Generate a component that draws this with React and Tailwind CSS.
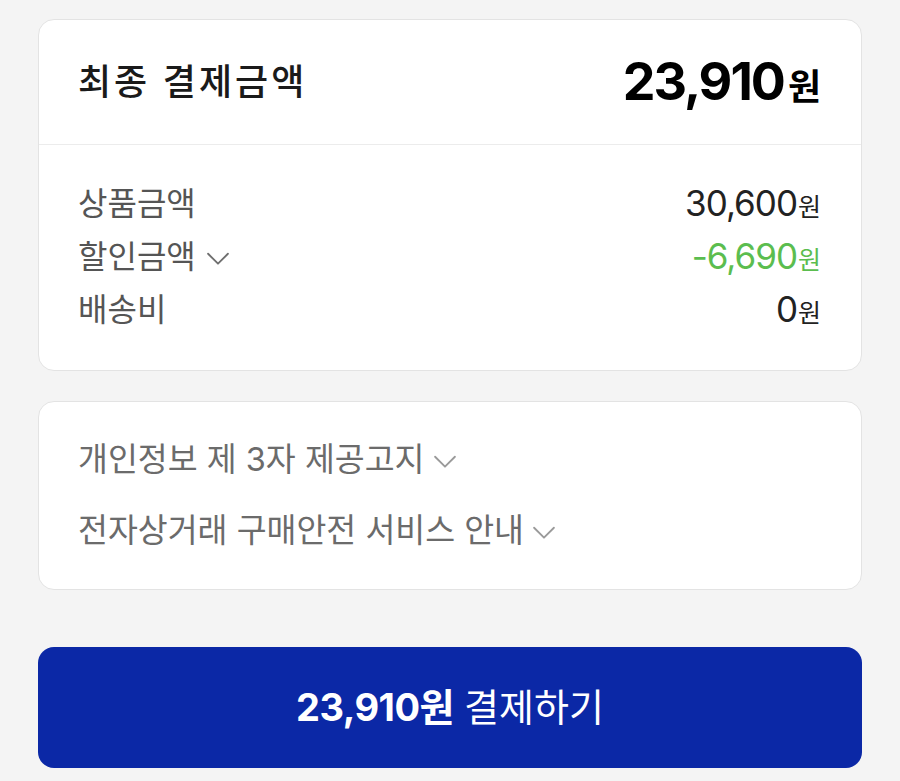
import React from "react";

const font = { fontFamily: '"Inter", "Noto Sans CJK KR", sans-serif' };

function Chevron({ className }) {
  return (
    <svg viewBox="0 0 24 24" className={className} fill="none" stroke="currentColor" strokeWidth="1.3" strokeLinecap="round" strokeLinejoin="round">
      <path d="M5 9l7 7 7-7" />
    </svg>
  );
}

function Row({ label, value, green, chevron }) {
  return (
    <div className="flex items-center justify-between h-[53px]">
      <div className="flex items-center gap-[5px] text-[32px] text-[#555555]">
        <span>{label}</span>
        {chevron && <Chevron className="w-[34px] h-[34px] text-[#6f6f6f] mt-[2px]" />}
      </div>
      <div className={"flex items-baseline " + (green ? "text-[#5bbd4f]" : "text-[#222222]")}>
        <span className="text-[35px] tracking-[-1px]">{value}</span>
        <span className="text-[25px] ml-[1px]">원</span>
      </div>
    </div>
  );
}

export default function App() {
  return (
    <div className="min-h-[781px] w-[900px] bg-[#f4f4f4] pt-[19px] px-[38px] pb-[13px]" style={font}>
      <div className="bg-white border border-[#e3e3e3] rounded-[16px] overflow-hidden">
        <div className="h-[125px] flex items-center justify-between pl-[39px] pr-[40px] border-b border-[#ececec]">
          <span className="text-[36px] font-medium text-[#1a1a1a] tracking-[3px]">최종 결제금액</span>
          <div className="flex items-baseline text-black">
            <span className="text-[52px] font-bold tracking-[-2px]">23,910</span>
            <span className="text-[36px] font-bold ml-[4px]">원</span>
          </div>
        </div>
        <div className="pl-[39px] pr-[40px] pt-[32px] pb-[34px]">
          <Row label="상품금액" value="30,600" />
          <Row label="할인금액" value="-6,690" green chevron />
          <Row label="배송비" value="0" />
        </div>
      </div>

      <div className="mt-[30px] bg-white border border-[#e3e3e3] rounded-[16px] h-[189px] flex flex-col justify-center pl-[39px] gap-[22px]">
        <div className="flex items-center gap-[3px] text-[32.5px] text-[#6b6b6b]">
          <span>개인정보 제 3자 제공고지</span>
          <Chevron className="w-[34px] h-[34px] text-[#9a9a9a] mt-[2px]" />
        </div>
        <div className="flex items-center gap-[3px] text-[32.5px] text-[#6b6b6b]">
          <span>전자상거래 구매안전 서비스 안내</span>
          <Chevron className="w-[34px] h-[34px] text-[#9a9a9a] mt-[2px]" />
        </div>
      </div>

      <button className="mt-[57px] w-full h-[121px] bg-[#0b28a6] rounded-[16px] flex items-center justify-center text-white">
        <span className="text-[38px] font-bold tracking-[-0.5px]">23,910원</span>
        <span className="text-[38px] ml-[10px]">결제하기</span>
      </button>
    </div>
  );
}
